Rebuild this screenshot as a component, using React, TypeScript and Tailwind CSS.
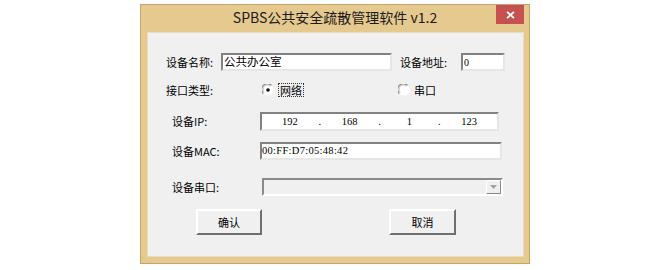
import React from "react";

const cjk = { fontFamily: '"Noto Sans CJK SC", "Noto Sans", sans-serif' };
const serif = { fontFamily: '"Liberation Serif", "Noto Sans CJK SC", serif' };

const sunken =
  "border-2 border-t-[#828282] border-l-[#828282] border-b-[#e6e6e6] border-r-[#e6e6e6] bg-white";
const raised =
  "border-2 border-t-[#ffffff] border-l-[#ffffff] border-b-[#6f6f6f] border-r-[#6f6f6f] bg-[#f0f0f0]";

function Radio({ checked }: { checked: boolean }) {
  return (
    <svg width="12" height="12" viewBox="0 0 12 12" className="shrink-0">
      <circle cx="6" cy="6" r="5.5" fill="#ffffff" />
      <path d="M1.3 9.5 A5.5 5.5 0 0 1 9.5 1.3" stroke="#8a8a8a" strokeWidth="1.2" fill="none" />
      <path d="M2.3 8.5 A4.3 4.3 0 0 1 8.5 2.3" stroke="#c0c0c0" strokeWidth="1" fill="none" />
      {checked && <circle cx="6" cy="6" r="1.8" fill="#111111" />}
    </svg>
  );
}

export default function App() {
  return (
    <div className="w-[672px] h-[270px] bg-white overflow-hidden pl-[140px] pt-[4px]" style={cjk}>
      <div className="w-[390px] h-[260px] border border-[#c4a566] bg-[#e5c98f] flex flex-col">
        {/* Title bar */}
        <div className="h-[27px] grid grid-cols-[1fr_auto_1fr]">
          <div />
          <div className="flex items-center pb-[2px] text-[14px] text-[#1b1b1b] whitespace-nowrap">
            SPBS公共安全疏散管理软件 v1.2
          </div>
          <div className="flex justify-end items-start pr-[5px]">
            <div className="w-[28px] h-[19px] bg-[#c75050] flex items-center justify-center">
              <svg width="9" height="8" viewBox="0 0 9 8">
                <path d="M1 0.8 L8 7.2 M8 0.8 L1 7.2" stroke="#ffffff" strokeWidth="1.8" />
              </svg>
            </div>
          </div>
        </div>
        {/* Client */}
        <div className="ml-[6px] mr-[5px] h-[225px] bg-[#f0f0f0] border border-[#e9dcc0] text-[11px] text-black pt-[20px]">
          {/* Row 1 */}
          <div className="h-[18px] flex items-center pl-[18px]">
            <span className="w-[55px]">设备名称:</span>
            <div className={`w-[171px] h-[18px] ${sunken} flex items-center pl-[1px] text-[11.5px]`}>
              公共办公室
            </div>
            <span className="ml-[8px] w-[61px]">设备地址:</span>
            <div className={`w-[44px] h-[18px] ${sunken} flex items-center pl-[1px] text-[10px]`} style={serif}>
              0
            </div>
          </div>
          {/* Row 2 */}
          <div className="mt-[12px] h-[14px] flex items-center pl-[18px]">
            <span className="w-[96px]">接口类型:</span>
            <Radio checked />
            <span className="ml-[4px] px-[1px] border border-dotted border-[#333] leading-[12px]">网络</span>
            <span className="ml-[94px] flex items-center">
              <Radio checked={false} />
              <span className="ml-[4px]">串口</span>
            </span>
          </div>
          {/* Row 3 IP */}
          <div className="mt-[15px] h-[19px] flex items-center pl-[24px]">
            <span className="w-[88px]">设备IP:</span>
            <div className={`w-[239px] h-[19px] ${sunken} flex items-center text-[10.5px]`} style={serif}>
              <span className="flex-1 text-center">192</span>
              <span className="w-[4px] text-center">.</span>
              <span className="flex-1 text-center">168</span>
              <span className="w-[4px] text-center">.</span>
              <span className="flex-1 text-center">1</span>
              <span className="w-[4px] text-center">.</span>
              <span className="flex-1 text-center">123</span>
            </div>
          </div>
          {/* Row 4 MAC */}
          <div className="mt-[11px] h-[18px] flex items-center pl-[24px]">
            <span className="w-[88px]">设备MAC:</span>
            <div className={`w-[242px] h-[18px] ${sunken} flex items-center pl-[0px] text-[10.5px] tracking-[0.3px]`} style={serif}>
              00:FF:D7:05:48:42
            </div>
          </div>
          {/* Row 5 Serial */}
          <div className="mt-[18px] h-[18px] flex items-center pl-[24px]">
            <span className="w-[90px]">设备串口:</span>
            <div className="w-[241px] h-[18px] border-2 border-t-[#8a8a8a] border-l-[#8a8a8a] border-b-[#ffffff] border-r-[#ffffff] bg-[#f0f0f0] flex justify-end items-stretch">
              <div className="w-[15px] border border-t-[#ffffff] border-l-[#ffffff] border-b-[#8a8a8a] border-r-[#8a8a8a] bg-[#f0f0f0] flex items-center justify-center">
                <svg width="7" height="4" viewBox="0 0 7 4">
                  <path d="M0 0 L7 0 L3.5 4 Z" fill="#a0a0a0" />
                </svg>
              </div>
            </div>
          </div>
          {/* Row 6 Buttons */}
          <div className="mt-[13px] h-[26px] flex items-center pl-[48px]">
            <div className={`w-[66px] h-[26px] ${raised} flex items-center justify-center`}>确认</div>
            <div className={`ml-[127px] w-[67px] h-[26px] ${raised} flex items-center justify-center`}>取消</div>
          </div>
        </div>
      </div>
    </div>
  );
}
